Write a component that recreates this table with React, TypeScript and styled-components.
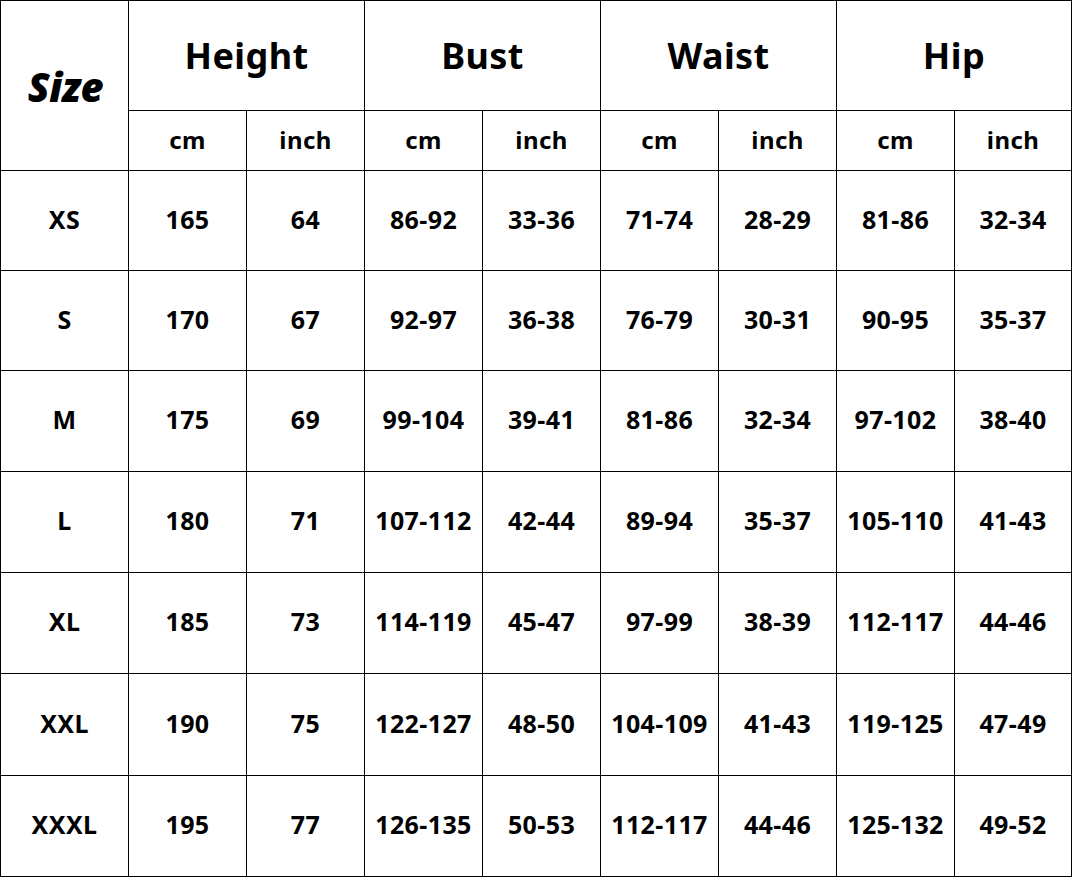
import React from "react";
import styled, { createGlobalStyle } from "styled-components";

const Global = createGlobalStyle`
  html, body { margin: 0; padding: 0; background: #fff; }
  body { font-family: "Noto Sans", "Open Sans", sans-serif; color: #000; }
`;

const Table = styled.div`
  display: grid;
  width: max-content;
  grid-template-columns: 127px repeat(7, 117px) 116px;
  grid-template-rows: 109px 59px 99px 99px 100px 100px 100px 101px 100px;
  gap: 1px;
  padding: 1px;
  background: #000;
`;

const Cell = styled.div<{ $rowSpan?: number; $colSpan?: number }>`
  background: #fff;
  display: flex;
  align-items: center;
  justify-content: center;
  font-weight: 700;
  font-size: 25px;
  letter-spacing: 0.4px;
  padding-bottom: 4px;
  grid-row: ${(p) => (p.$rowSpan ? `span ${p.$rowSpan}` : "auto")};
  grid-column: ${(p) => (p.$colSpan ? `span ${p.$colSpan}` : "auto")};
`;

const SizeCell = styled(Cell)`
  font-size: 40px;
  font-weight: 900;
  font-style: italic;
  letter-spacing: -0.5px;
  padding: 2px 0 0 2px;
`;

const GroupCell = styled(Cell)`
  font-size: 36px;
  padding-bottom: 0;
`;

const UnitCell = styled(Cell)`
  font-size: 24px;
  padding-bottom: 3px;
`;

const groups = ["Height", "Bust", "Waist", "Hip"];

const rows: string[][] = [
  ["XS", "165", "64", "86-92", "33-36", "71-74", "28-29", "81-86", "32-34"],
  ["S", "170", "67", "92-97", "36-38", "76-79", "30-31", "90-95", "35-37"],
  ["M", "175", "69", "99-104", "39-41", "81-86", "32-34", "97-102", "38-40"],
  ["L", "180", "71", "107-112", "42-44", "89-94", "35-37", "105-110", "41-43"],
  ["XL", "185", "73", "114-119", "45-47", "97-99", "38-39", "112-117", "44-46"],
  ["XXL", "190", "75", "122-127", "48-50", "104-109", "41-43", "119-125", "47-49"],
  ["XXXL", "195", "77", "126-135", "50-53", "112-117", "44-46", "125-132", "49-52"],
];

export default function App() {
  return (
    <>
      <Global />
      <Table>
        <SizeCell $rowSpan={2}>Size</SizeCell>
        {groups.map((g) => (
          <GroupCell key={g} $colSpan={2}>
            {g}
          </GroupCell>
        ))}
        {groups.map((g) => (
          <React.Fragment key={g + "u"}>
            <UnitCell>cm</UnitCell>
            <UnitCell>inch</UnitCell>
          </React.Fragment>
        ))}
        {rows.map((r) =>
          r.map((v, i) => <Cell key={r[0] + i}>{v}</Cell>)
        )}
      </Table>
    </>
  );
}
